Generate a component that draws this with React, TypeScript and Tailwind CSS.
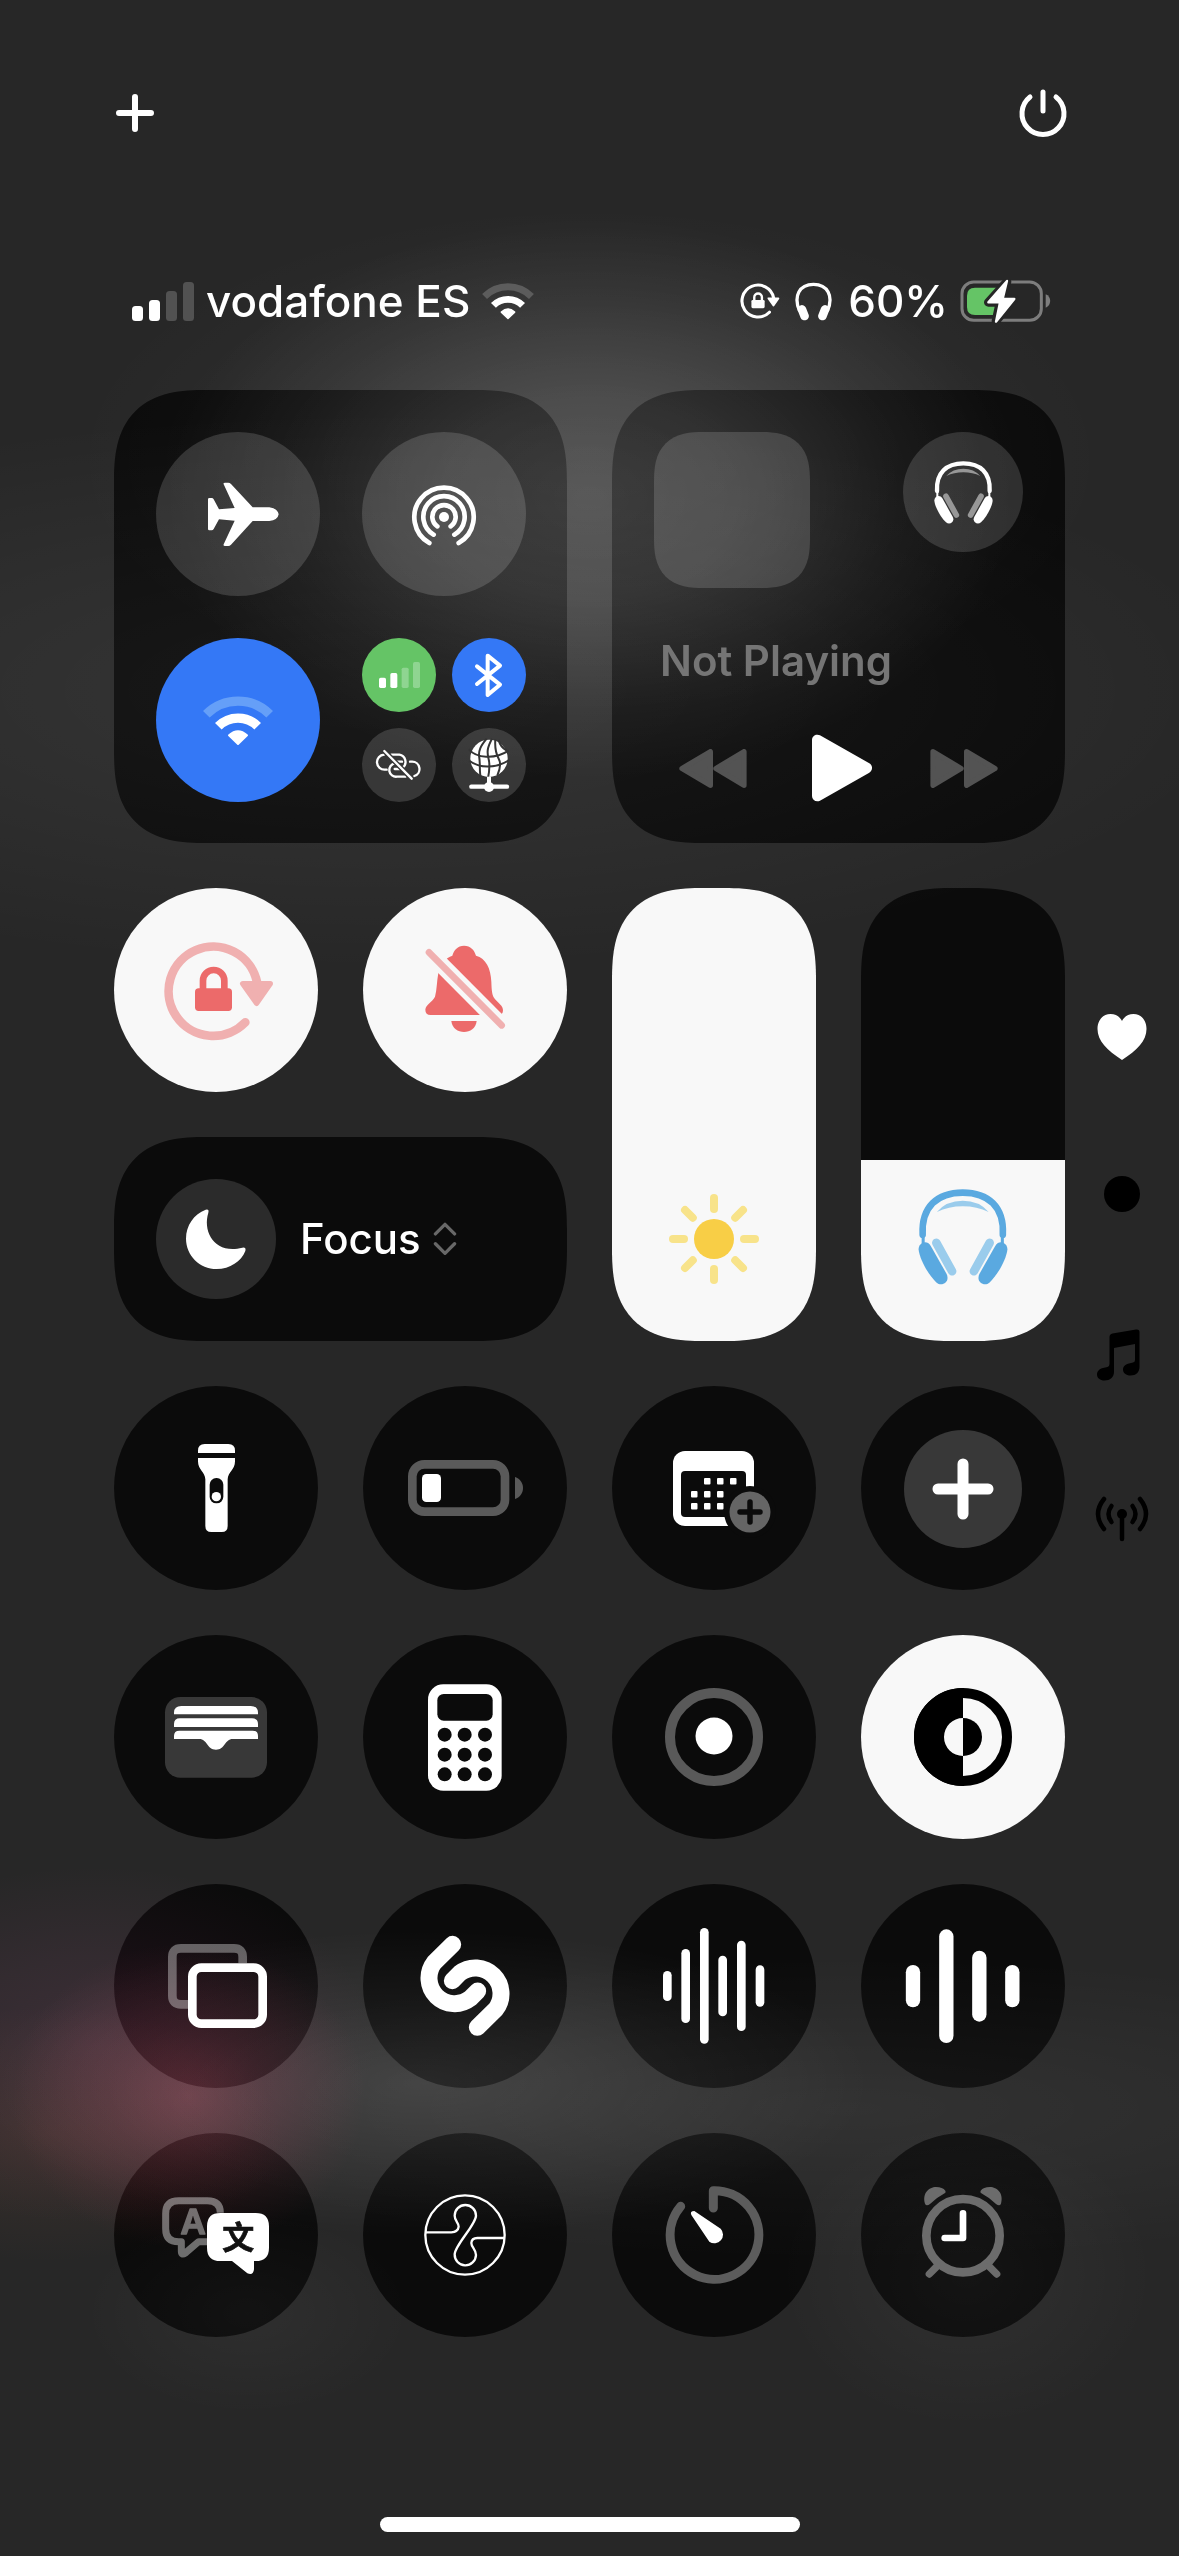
import { useState, type ReactNode } from "react";

/* ---------- shared surfaces ---------- */

const panelRadius =
  "rounded-[74px] [corner-shape:superellipse(1.4)] supports-[corner-shape:squircle]:rounded-[92px]";

function Plate({ className }: { className: string }) {
  return (
    <span
      aria-hidden="true"
      className={`pointer-events-none absolute inset-0 bg-[#1c1c1c] mix-blend-difference ${className}`}
    />
  );
}

function Tile({
  label,
  viewBox,
  light = false,
  children,
}: {
  label: string;
  viewBox: string;
  light?: boolean;
  children: ReactNode;
}) {
  return (
    <button
      type="button"
      aria-label={label}
      className={`relative aspect-square w-full rounded-full ${light ? "bg-[#f8f8f8]" : ""}`}
    >
      {!light && <Plate className="rounded-full" />}
      <svg viewBox={viewBox} className="relative block size-full" fill="none">
        {children}
      </svg>
    </button>
  );
}

function RoundToggle({
  label,
  viewBox,
  tone,
  children,
}: {
  label: string;
  viewBox: string;
  tone: string;
  children: ReactNode;
}) {
  return (
    <button
      type="button"
      aria-label={label}
      className={`aspect-square w-full rounded-full ${tone}`}
    >
      <svg viewBox={viewBox} className="block size-full" fill="none">
        {children}
      </svg>
    </button>
  );
}

/* ---------- reusable drawings ---------- */

function RotationLock({ ring, lock }: { ring: string; lock: string }) {
  return (
    <>
      <path
        d="M436 457A134 134 0 1 1 471 336"
        stroke={ring}
        strokeWidth="26"
        strokeLinecap="round"
      />
      <path
        d="M428 341H511L470 400Z"
        fill={ring}
        stroke={ring}
        strokeWidth="16"
        strokeLinejoin="round"
      />
      <rect x="285" y="355" width="111" height="68" rx="11" fill={lock} />
      <path d="M309 360V332A32 32 0 0 1 373 332V360" stroke={lock} strokeWidth="20" />
    </>
  );
}

function Headphones({ main, soft }: { main: string; soft: string }) {
  return (
    <>
      <path
        d="M1011 332C1008 277 1040 249 1090 249C1140 249 1172 277 1169 332"
        stroke={main}
        strokeWidth="13"
        strokeLinecap="round"
      />
      <path d="M1012 330V352M1168 330V352" stroke={main} strokeWidth="6" />
      <path d="M1039 287Q1058 265 1090 265Q1122 265 1141 287Q1118 276 1090 276Q1062 276 1039 287Z" fill={soft} />
      <path
        d="M1003 361C1003 348 1019 341 1027 354L1058 409C1066 424 1049 436 1038 426C1022 411 1005 380 1003 361Z"
        fill={main}
      />
      <path
        d="M1178 361C1178 348 1162 341 1154 354L1123 409C1115 424 1132 436 1143 426C1159 411 1176 380 1178 361Z"
        fill={main}
      />
      <path
        d="M1038 348L1069 404M1143 348L1112 404"
        stroke={soft}
        strokeWidth="17"
        strokeLinecap="round"
      />
    </>
  );
}

function Wifi({ faint }: { faint: string }) {
  return (
    <>
      <path d="M319 1003A134 134 0 0 1 509 1003" stroke={faint} strokeWidth="28" />
      <path d="M355 1039A83 83 0 0 1 473 1039" stroke="#fff" strokeWidth="28" />
      <path
        d="M387 1066Q414 1042 441 1066L414 1092Z"
        fill="#fff"
        stroke="#fff"
        strokeWidth="6"
        strokeLinejoin="round"
      />
    </>
  );
}

/* ---------- top ---------- */

function TopBar() {
  return (
    <header className="flex items-center justify-between px-[105px] pt-[83px]">
      <button type="button" aria-label="Edit controls" className="size-[60px]">
        <svg viewBox="0 0 60 60" className="size-full" stroke="#fff" strokeWidth="6" strokeLinecap="round">
          <path d="M30 14V46M14 30H46" />
        </svg>
      </button>
      <button type="button" aria-label="Power off" className="size-[60px]">
        <svg
          viewBox="0 0 60 60"
          className="size-full"
          fill="none"
          stroke="#fff"
          strokeWidth="5"
          strokeLinecap="round"
        >
          <path d="M29 9V28" />
          <path d="M16 14A21 21 0 1 0 42 14" />
        </svg>
      </button>
    </header>
  );
}

function StatusBar() {
  return (
    <div className="mt-[133px] flex h-[50px] items-center justify-between pr-[128px] pl-[132px] text-[44px] leading-[50px] font-medium">
      <div className="flex items-center gap-3">
        <svg viewBox="0 0 62 40" className="h-10 w-[62px]" aria-label="Signal: two bars">
          <rect x="0" y="25" width="11" height="15" rx="3.5" fill="#fff" />
          <rect x="17" y="19" width="11" height="21" rx="3.5" fill="#fff" />
          <rect x="34" y="10" width="11" height="30" rx="3.5" fill="#525252" />
          <rect x="51" y="1" width="11" height="39" rx="3.5" fill="#525252" />
        </svg>
        <span>vodafone ES</span>
        <svg viewBox="309 944 210 154" className="h-[38px] w-[52px]" fill="none" aria-label="Wi-Fi">
          <Wifi faint="#5c5c5c" />
        </svg>
      </div>
      <div className="flex items-center gap-4">
        <div className="flex items-center gap-[15px]">
          <svg viewBox="190 212 334 302" className="h-9 w-10" fill="none" aria-label="Rotation locked">
            <RotationLock ring="#fff" lock="#fff" />
          </svg>
          <svg viewBox="190 64 112 118" className="h-[39px] w-[37px]" fill="none" aria-label="Headphones">
            <path d="M204 152C184 106 204 71 246 71C288 71 308 106 288 152" stroke="#fff" strokeWidth="10" />
            <path
              d="M211 147L219 167M281 147L273 167"
              stroke="#fff"
              strokeWidth="26"
              strokeLinecap="round"
            />
          </svg>
        </div>
        <div className="flex items-center gap-3">
          <span>60%</span>
          <svg viewBox="689 58 273 132" className="h-11 w-[91px]" fill="none" aria-label="Charging">
            <rect x="695" y="67" width="238" height="115" rx="35" stroke="#7d7d7d" strokeWidth="9" />
            <path d="M946 104C964 110 964 138 946 144Z" fill="#7d7d7d" />
            <path d="M734 84H800V166H734Q710 166 710 142V108Q710 84 734 84Z" fill="#65c466" />
            <path
              d="M830 66L774 128H809L797 184L852 118H817Z"
              fill="#262626"
              stroke="#262626"
              strokeWidth="26"
              strokeLinejoin="round"
            />
            <path
              d="M830 64L774 128H809L797 186L852 118H817Z"
              fill="#fff"
              stroke="#fff"
              strokeWidth="7"
              strokeLinejoin="round"
            />
          </svg>
        </div>
      </div>
    </div>
  );
}

/* ---------- panels ---------- */

function Connectivity() {
  const glass = "bg-white/15";
  return (
    <section aria-label="Connectivity" className="relative col-span-2 row-span-2">
      <Plate className={panelRadius} />
      <div className="relative grid grid-cols-2 gap-[42px] pt-[42px] pr-[41px] pb-[41px] pl-[42px]">
        <RoundToggle label="Airplane mode" viewBox="168 155 492 492" tone={glass}>
          <path
            fill="#fff"
            d="M324 357Q324 353 328 353H335Q339 353 341 357L357 387L404 383L371 312Q369 307 375 307H385Q389 307 393 311L458 381H508Q533 384 536 402Q533 420 508 422H458L393 493Q389 497 385 497H375Q369 497 371 492L404 421L357 417L341 446Q339 450 335 450H328Q324 450 324 446Z"
          />
        </RoundToggle>
        <RoundToggle label="AirDrop" viewBox="786 155 492 492" tone={glass}>
          <circle cx="1032" cy="410" r="15" fill="#fff" />
          <g stroke="#fff" strokeWidth="14" strokeLinecap="round">
            <path d="M1012 438A35 35 0 1 1 1052 438" />
            <path d="M1001 463A62 62 0 1 1 1063 463" />
            <path d="M988 488A89 89 0 1 1 1076 488" />
          </g>
        </RoundToggle>
        <RoundToggle label="Wi-Fi" viewBox="168 774 492 492" tone="bg-[#3478f6]">
          <Wifi faint="#659ff8" />
        </RoundToggle>
        <div className="grid grid-cols-2 gap-4">
          <RoundToggle label="Mobile data" viewBox="786 774 222 222" tone="bg-[#65c466]">
            <rect x="837" y="893" width="21" height="31" rx="5" fill="#fff" />
            <rect x="871" y="879" width="21" height="45" rx="5" fill="#fff" />
            <rect x="905" y="863" width="21" height="61" rx="5" fill="#8fd591" />
            <rect x="939" y="846" width="21" height="78" rx="5" fill="#8fd591" />
          </RoundToggle>
          <RoundToggle label="Bluetooth" viewBox="1056 774 222 222" tone="bg-[#3478f6]">
            <path
              d="M1131 859L1200 914L1163 945V827L1200 857L1131 912"
              stroke="#fff"
              strokeWidth="12"
              strokeLinecap="round"
              strokeLinejoin="round"
            />
          </RoundToggle>
          <RoundToggle label="Personal hotspot off" viewBox="786 1044 222 222" tone={glass}>
            <g stroke="#fff" strokeWidth="7" strokeLinecap="round">
              <path d="M860 1169H855A22 22 0 0 1 852 1124" />
              <path d="M874 1124H898A22 22 0 0 1 908 1163" />
              <path d="M930 1145H936A22 22 0 0 1 943 1188" />
              <path d="M885 1150A20 20 0 0 0 891 1190H916" />
              <path d="M884 1167H899M892 1145H906" />
            </g>
            <path d="M853 1113L935 1196" stroke="#373737" strokeWidth="15" />
            <path d="M853 1113L935 1196" stroke="#fff" strokeWidth="7" strokeLinecap="round" />
          </RoundToggle>
          <RoundToggle label="VPN" viewBox="1056 1044 222 222" tone={glass}>
            <circle cx="1167" cy="1135" r="56" fill="#fff" />
            <g stroke="#343434" strokeWidth="6">
              <path d="M1160 1076C1142 1098 1134 1112 1138 1134C1141 1156 1138 1174 1142 1192" />
              <path d="M1176 1076C1162 1102 1160 1116 1166 1138C1171 1158 1168 1174 1164 1194" />
              <path d="M1186 1078C1184 1104 1186 1118 1196 1136C1204 1150 1200 1168 1192 1186" />
              <path d="M1106 1108C1130 1134 1182 1140 1226 1112" />
              <path d="M1108 1142C1136 1164 1184 1168 1228 1140" />
              <path d="M1196 1080C1200 1098 1210 1106 1220 1112" />
            </g>
            <path d="M1167 1190V1220" stroke="#fff" strokeWidth="12" />
            <path d="M1114 1220H1221" stroke="#fff" strokeWidth="13" strokeLinecap="round" />
            <circle cx="1167" cy="1221" r="15" fill="#fff" />
          </RoundToggle>
        </div>
      </div>
    </section>
  );
}

function SkipIcon({ flip = false }: { flip?: boolean }) {
  return (
    <svg
      viewBox="237 1106 202 116"
      className={`h-[39px] w-[68px] ${flip ? "rotate-180" : ""}`}
      fill="#535353"
      stroke="#535353"
      strokeWidth="16"
      strokeLinejoin="round"
    >
      <path d="M246 1164L330 1114V1214Z" />
      <path d="M347 1164L430 1114V1214Z" />
    </svg>
  );
}

function NowPlaying() {
  return (
    <section aria-label="Now playing" className="relative col-span-2 row-span-2">
      <Plate className={panelRadius} />
      <div className="relative flex h-full flex-col px-[42px] pt-[42px] pb-[41px]">
        <div className="flex items-start justify-between">
          <div className="size-[156px] rounded-[38px] bg-white/15 [corner-shape:superellipse(1.4)] supports-[corner-shape:squircle]:rounded-[50px]" />
          <button type="button" aria-label="Audio output" className="size-[120px] rounded-full bg-white/14">
            <svg viewBox="909 155 360 360" className="block size-full" fill="none">
              <Headphones main="#fff" soft="#979797" />
            </svg>
          </button>
        </div>
        <p className="mt-[48px] pl-[6px] text-[42px] leading-[50px] font-semibold text-[#757575]">Not Playing</p>
        <div className="mt-auto flex items-center justify-between px-[25px]">
          <button type="button" aria-label="Previous track">
            <SkipIcon />
          </button>
          <button type="button" aria-label="Play">
            <svg viewBox="618 1064 198 204" className="h-[68px] w-[66px]" fill="#fff">
              <path
                d="M652 1082V1250L800 1166Z"
                stroke="#fff"
                strokeWidth="32"
                strokeLinejoin="round"
              />
            </svg>
          </button>
          <button type="button" aria-label="Next track">
            <SkipIcon flip />
          </button>
        </div>
      </div>
    </section>
  );
}

function Focus() {
  return (
    <section aria-label="Focus" className="relative col-span-2 flex items-center p-[42px]">
      <Plate className={panelRadius} />
      <button type="button" className="relative flex items-center">
        <span className="size-[120px] rounded-full bg-white/13">
          <svg viewBox="168 926 360 360" className="block size-full">
            <path
              fill="#fff"
              d="M317 1018Q328 1015 325 1027C307 1085 345 1153 427 1132Q439 1130 436 1142C424 1173 390 1196 350 1196C299 1196 258 1155 258 1105C258 1065 282 1031 317 1018Z"
            />
          </svg>
        </span>
        <span className="ml-[24px] text-[42px] leading-[50px] font-medium">Focus</span>
        <svg
          viewBox="1003 1055 72 103"
          className="ml-3 h-[34px] w-6"
          fill="none"
          stroke="#686868"
          strokeWidth="10"
          strokeLinecap="round"
          strokeLinejoin="round"
        >
          <path d="M1010 1091L1039 1062L1068 1091M1010 1121L1039 1150L1068 1121" />
        </svg>
      </button>
    </section>
  );
}

function Slider({ label, initial, children }: { label: string; initial: number; children: ReactNode }) {
  const [value, setValue] = useState(initial);
  return (
    <label className={`relative row-span-2 flex flex-col justify-end overflow-hidden ${panelRadius}`}>
      <Plate className="" />
      <span className="relative block bg-[#f8f8f8]" style={{ height: `${value}%` }} />
      <span className="absolute inset-x-0 bottom-[53px] flex justify-center">{children}</span>
      <input
        type="range"
        aria-label={label}
        min={0}
        max={100}
        value={value}
        onChange={(e) => setValue(Number(e.target.value))}
        className="absolute inset-0 size-full cursor-pointer opacity-0 [direction:rtl] [writing-mode:vertical-lr]"
      />
    </label>
  );
}

const rays = [0, 45, 90, 135, 180, 225, 270, 315];

function Sun() {
  return (
    <svg viewBox="0 0 98 98" className="size-[98px]">
      <circle cx="49" cy="49" r="20" fill="#f8ce46" />
      {rays.map((angle) => (
        <path
          key={angle}
          d="M49 8V19"
          stroke="#f8e38a"
          strokeWidth="8"
          strokeLinecap="round"
          transform={`rotate(${angle} 49 49)`}
        />
      ))}
    </svg>
  );
}

function Bars({ bars, width }: { bars: number[][]; width: number }) {
  return (
    <>
      {bars.map(([x, top, bottom]) => (
        <rect key={x} x={x - width / 2} y={top} width={width} height={bottom - top} rx={width / 2} fill="#fff" />
      ))}
    </>
  );
}

/* ---------- round controls ---------- */

const calendarDots = [
  [95, 95], [108, 95], [121, 95],
  [82, 108], [95, 108], [108, 108],
  [82, 120], [95, 120], [108, 120],
];

function Controls() {
  return (
    <>
      <Tile label="Flashlight" viewBox="42 48 612 612">
        <path d="M294 249V242Q294 222 314 222H385Q405 222 405 242V249Z" fill="#fff" />
        <path
          d="M294 264H405V274C405 300 384 305 383 328V468Q383 486 365 486H334Q316 486 316 468V328C315 305 294 300 294 274Z"
          fill="#fff"
        />
        <rect x="329" y="324" width="41" height="76" rx="20" fill="#0b0b0b" />
        <circle cx="349" cy="380" r="14" fill="#fff" />
      </Tile>
      <Tile label="Low power mode" viewBox="789 48 612 612">
        <rect x="937" y="283" width="278" height="142" rx="36" stroke="#5a5a5a" strokeWidth="26" />
        <path d="M1245 321C1277 332 1277 376 1245 387Z" fill="#5a5a5a" />
        <rect x="966" y="312" width="57" height="84" rx="13" fill="#fff" />
      </Tile>
      <Tile label="New calendar event" viewBox="0 0 204 204">
        <rect x="61" y="65" width="81" height="75" rx="12" fill="#fff" />
        <rect x="69" y="85" width="65" height="46" rx="4" fill="#0b0b0b" />
        {calendarDots.map(([x, y]) => (
          <rect key={`${x}-${y}`} x={x - 3} y={y - 3} width="6.5" height="6.5" rx="1" fill="#fff" />
        ))}
        <circle cx="138" cy="126" r="26" fill="#0b0b0b" />
        <circle cx="138" cy="126" r="20.5" fill="#656565" />
        <path d="M138 116V136M128 126H148" stroke="#0b0b0b" strokeWidth="5.5" strokeLinecap="round" />
      </Tile>
      <Tile label="Add control" viewBox="0 0 204 204">
        <circle cx="102" cy="103" r="59" fill="#383838" />
        <path d="M102 78V128M77 103H127" stroke="#fff" strokeWidth="11" strokeLinecap="round" />
      </Tile>

      <Tile label="Wallet" viewBox="42 795 612 612">
        <rect x="195" y="981" width="306" height="242" rx="46" fill="#383838" />
        <g fill="#fff">
          <path d="M222 1033V1028Q222 1008 244 1008H452Q474 1008 474 1028V1033Z" />
          <path d="M222 1071V1062Q222 1045 240 1045H456Q474 1045 474 1062V1071Z" />
          <path d="M222 1107V1098Q222 1082 238 1082H458Q474 1082 474 1098V1107H398C374 1107 376 1139 348 1139C320 1139 322 1107 298 1107Z" />
        </g>
      </Tile>
      <Tile label="Calculator" viewBox="789 795 612 612">
        <rect x="984" y="943" width="221" height="319" rx="46" fill="#fff" />
        <rect x="1012" y="972" width="166" height="80" rx="19" fill="#0b0b0b" />
        {[1094, 1154, 1213].map((y) =>
          [1034, 1094, 1155].map((x) => <circle key={`${x}-${y}`} cx={x} cy={y} r="21" fill="#0b0b0b" />),
        )}
      </Tile>
      <Tile label="Screen recording" viewBox="0 0 204 204">
        <circle cx="102" cy="102" r="44" stroke="#595959" strokeWidth="10" />
        <circle cx="102" cy="101" r="18.5" fill="#fff" />
      </Tile>
      <Tile label="Dark mode" viewBox="0 0 204 204" light>
        <circle cx="102" cy="102" r="44" stroke="#000" strokeWidth="10" />
        <path d="M102 53A49 49 0 0 0 102 151V121A19 19 0 0 1 102 83Z" fill="#000" />
        <path d="M102 83A19 19 0 0 1 102 121Z" fill="#000" />
      </Tile>

      <Tile label="Screen mirroring" viewBox="42 42 612 612">
        <path
          d="M264 403H243Q217 403 217 377V261Q217 235 243 235H402Q428 235 428 261V279"
          stroke="#fff"
          strokeOpacity="0.35"
          strokeWidth="26"
        />
        <rect x="277" y="293" width="211" height="168" rx="27" stroke="#fff" strokeWidth="26" />
      </Tile>
      <Tile label="Recognise music" viewBox="789 42 612 612">
        <path
          d="M1058 223L1003 277A77 77 0 0 0 1111 385L1133 363M1132 472L1187 418A77 77 0 0 0 1079 310L1057 332"
          stroke="#fff"
          strokeWidth="51"
          strokeLinecap="round"
        />
      </Tile>
      <Tile label="Voice memo" viewBox="36 42 612 612">
        <Bars
          width={26}
          bars={[
            [202, 303, 393],
            [257, 237, 459],
            [313, 174, 521],
            [368, 257, 439],
            [424, 212, 483],
            [480, 286, 410],
          ]}
        />
      </Tile>
      <Tile label="Live speech" viewBox="783 42 612 612">
        <Bars
          width={43}
          bars={[
            [939, 285, 412],
            [1039, 178, 519],
            [1138, 242, 455],
            [1237, 285, 412],
          ]}
        />
      </Tile>

      <Tile label="Translate" viewBox="42 789 612 612">
        <g opacity="0.4">
          <path
            d="M321 1115H296L256 1149Q244 1157 244 1144V1115H236Q197 1115 197 1076V1031Q197 992 236 992H322Q361 992 361 1028"
            stroke="#fff"
            strokeWidth="21"
            strokeLinejoin="round"
          />
          <text
            x="279"
            y="1091"
            textAnchor="middle"
            fill="#fff"
            stroke="#fff"
            strokeWidth="4"
            strokeLinejoin="round"
            className="font-['Inter',sans-serif] text-[104px] font-semibold"
          >
            A
          </text>
        </g>
        <path
          d="M361 1029H467Q507 1029 507 1069V1133Q507 1173 467 1173H462V1198Q460 1218 442 1210L396 1173H361Q321 1173 321 1133V1069Q321 1029 361 1029Z"
          fill="#fff"
        />
        <text
          x="415"
          y="1138"
          textAnchor="middle"
          fill="#111"
          stroke="#111"
          strokeWidth="2"
          className="font-['Noto_Sans_CJK_SC',sans-serif] text-[96px] font-bold"
        >
          文
        </text>
      </Tile>
      <Tile label="Breathing exercise" viewBox="789 789 612 612">
        <g stroke="#fff" strokeWidth="7">
          <circle cx="1095" cy="1095" r="119" />
          <path d="M977 1087H1054Q1074 1086 1076 1070C1076 1057 1064 1053 1064 1037A31 31 0 0 1 1128 1037C1128 1064 1064 1126 1064 1153A32 32 0 0 0 1128 1155C1128 1138 1114 1132 1114 1119Q1115 1104 1132 1104H1213" />
        </g>
      </Tile>
      <Tile label="Timer" viewBox="36 789 612 612">
        <path
          d="M340 1014V962A133 133 0 1 1 242 1009"
          stroke="#5c5c5c"
          strokeWidth="27"
          strokeLinecap="round"
          strokeLinejoin="round"
        />
        <path d="M274 1035Q269 1023 283 1023L362 1076A26 26 0 0 1 328 1115Z" fill="#fff" />
      </Tile>
      <Tile label="Alarm" viewBox="783 789 612 612">
        <circle cx="1089" cy="1097" r="110" stroke="#6c6c6c" strokeWidth="26" />
        <path
          d="M1010 1190L988 1212M1168 1190L1190 1212"
          stroke="#6c6c6c"
          strokeWidth="22"
          strokeLinecap="round"
        />
        <path
          d="M975 1001C966 970 987 951 1008 951Q1028 951 1036 962Q1039 967 1034 970Q1008 984 990 1002Q979 1010 975 1001Z"
          fill="#6c6c6c"
        />
        <path
          d="M1203 1001C1212 970 1191 951 1170 951Q1150 951 1142 962Q1139 967 1144 970Q1170 984 1188 1002Q1199 1010 1203 1001Z"
          fill="#6c6c6c"
        />
        <path
          d="M1089 1030V1104H1034"
          stroke="#fff"
          strokeWidth="20"
          strokeLinecap="round"
          strokeLinejoin="round"
        />
      </Tile>
    </>
  );
}

/* ---------- page selector ---------- */

function PageSelector() {
  return (
    <nav
      aria-label="Control pages"
      className="absolute inset-y-0 right-0 flex w-[115px] flex-col items-center justify-center gap-[106px]"
    >
      <button type="button" aria-label="Favourites" className="size-[54px]">
        <svg viewBox="0 0 54 54" className="size-full">
          <path
            fill="#fff"
            d="M27 49C12 39 2.500 30 2.500 18C2.500 9 8 3 15.500 3C21 3 25 6 27 10C29 6 33 3 38.500 3C46 3 51.500 9 51.500 18C51.500 30 42 39 27 49Z"
          />
        </svg>
      </button>
      <button type="button" aria-label="Home" className="size-[54px]">
        <svg viewBox="0 0 54 54" className="size-full">
          <circle cx="27" cy="23" r="18" fill="#000" />
        </svg>
      </button>
      <button type="button" aria-label="Music" className="size-[54px]">
        <svg viewBox="0 0 54 54" className="size-full overflow-visible">
          <path
            fill="#000"
            d="M14.500 6Q14.500 3 17.500 2.500L41 -1.500Q44.500 -2 44.500 1V36C44.500 41 41 44.500 35.500 44.500C31 44.500 28 42 28 38.500C28 35 31 33 34 32.500L38 31.500Q40 31 40 29V13L19 17V41C19 46 15 49.500 9.500 49.500C5 49.500 2 47 2 43.500C2 40 5 37.500 8 37L12.500 36Q14.500 35.500 14.500 33Z"
          />
        </svg>
      </button>
      <button type="button" aria-label="Connections" className="size-[54px]">
        <svg
          viewBox="0 0 54 54"
          className="size-full"
          fill="none"
          stroke="#000"
          strokeWidth="4.500"
          strokeLinecap="round"
        >
          <circle cx="27" cy="23" r="5" fill="#000" stroke="none" />
          <path d="M27 23V48" />
          <path d="M16.500 15Q10.500 23 16.500 31M37.500 15Q43.500 23 37.500 31" />
          <path d="M9 8Q-3 23 9 38M45 8Q57 23 45 38" />
        </svg>
      </button>
    </nav>
  );
}

/* Soft light behind the glass: a neutral pool at the top, a rose one at the lower left. */
const glow =
  "bg-[radial-gradient(36%_11%_at_50%_19.500%,rgba(255,255,255,0.18),rgba(255,255,255,0.14)_35%,rgba(255,255,255,0.05)_72%,transparent),radial-gradient(44%_10%_at_50%_18%,rgba(255,255,255,0.05),rgba(255,255,255,0.03)_50%,transparent),radial-gradient(75%_11%_at_32%_27%,rgba(255,255,255,0.065),rgba(255,255,255,0.03)_55%,transparent),radial-gradient(15%_6%_at_16%_82%,rgba(225,100,125,0.28),rgba(215,90,115,0.14)_45%,transparent),radial-gradient(24%_7%_at_8%_80%,rgba(190,90,150,0.14),rgba(190,90,150,0.08)_50%,transparent),radial-gradient(20%_5%_at_4%_83.500%,rgba(190,110,70,0.12),transparent),radial-gradient(38%_6%_at_36%_81.500%,rgba(255,255,255,0.12),rgba(255,255,255,0.06)_50%,transparent),radial-gradient(60%_6%_at_72%_82.500%,rgba(255,255,255,0.05),transparent),radial-gradient(16%_6%_at_82%_89%,rgba(255,255,255,0.045),transparent),radial-gradient(14%_4%_at_21%_90.500%,rgba(255,255,255,0.035),transparent)]";

export default function App() {
  return (
    <div
      className={`relative isolate flex min-h-screen flex-col bg-[#272727] font-['Inter','Noto_Sans',sans-serif] text-white ${glow}`}
    >
      <TopBar />
      <StatusBar />
      <main className="mx-[114px] mt-[64px] grid grid-cols-4 gap-[45px]">
        <Connectivity />
        <NowPlaying />
        <Tile label="Rotation lock" viewBox="42 54 612 612" light>
          <RotationLock ring="#f0b0b0" lock="#ec6a6a" />
        </Tile>
        <Tile label="Silent mode" viewBox="789 54 612 612" light>
          <path
            fill="#ec6a6a"
            d="M1092 227C1112 227 1123 240 1128 257C1158 265 1172 295 1174 335C1175 362 1176 374 1183 385C1194 399 1210 408 1209 422Q1208 435 1194 435H992Q976 435 976 419C977 403 998 396 1005 380C1011 360 1010 335 1015 309C1020 285 1038 262 1057 257C1062 240 1073 227 1092 227Z"
          />
          <path d="M1054 453H1130C1126 497 1058 497 1054 453Z" fill="#ec6a6a" />
          <path d="M987 247L1230 491" stroke="#f8f8f8" strokeWidth="49" />
          <path d="M987 247L1205 466" stroke="#f0b0b0" strokeWidth="20" strokeLinecap="round" />
        </Tile>
        <Slider label="Brightness" initial={100}>
          <Sun />
        </Slider>
        <Slider label="Volume" initial={40}>
          <svg viewBox="994 236 193 201" className="h-[102px] w-[98px]" fill="none">
            <Headphones main="#5aa9e0" soft="#9accec" />
          </svg>
        </Slider>
        <Focus />
        <Controls />
      </main>
      <PageSelector />
      <div className="mx-auto mt-auto mb-6 h-[15px] w-[420px] rounded-full bg-white" />
    </div>
  );
}
